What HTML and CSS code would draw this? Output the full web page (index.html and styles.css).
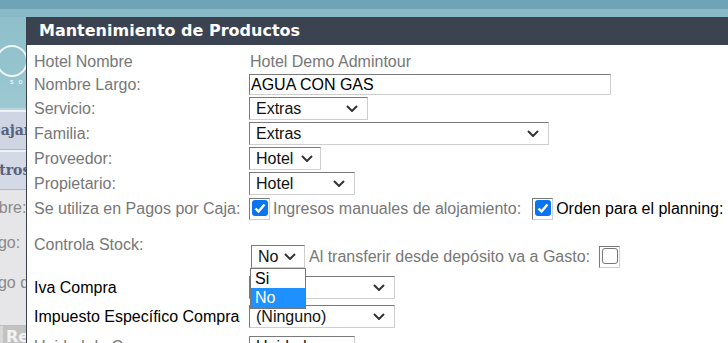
FILE: index.html
```html
<!DOCTYPE html>
<html lang="es">
<head>
  <meta charset="UTF-8">
  <meta name="viewport" content="width=device-width, initial-scale=1.0">
  <title>Mantenimiento de Productos</title>
  <link rel="stylesheet" href="styles.css">
</head>
<body>
  <!-- Page behind the dialog -->
  <div class="backdrop">
    <div class="band-top"></div>
    <div class="band-sub"></div>
    <div class="side">
      <div class="side-logo">
        <div class="logo-ring"></div>
        <div class="logo-text">sor</div>
      </div>
      <div class="side-menu">
        <div class="menu-item first"><span>Trabajar</span></div>
        <div class="menu-item"><span>Otros</span></div>
      </div>
      <div class="side-fields">
        <div class="field f1">Nombre:</div>
        <div class="field f2">Código:</div>
        <div class="field f3">Código de</div>
      </div>
      <div class="side-tools"><span class="tool-dark"></span><span class="tool-btn">Re</span></div>
    </div>
  </div>

  <!-- Dialog -->
  <div class="dialog">
    <div class="dialog-title">Mantenimiento de Productos</div>
    <div class="form">
      <div class="row h22">
        <div class="label">Hotel Nombre</div>
        <div class="value">Hotel Demo Admintour</div>
      </div>
      <div class="row h23">
        <div class="label">Nombre Largo:</div>
        <input class="text-input" type="text" value="AGUA CON GAS">
      </div>
      <div class="row h25">
        <div class="label">Servicio:</div>
        <div class="select w-servicio"><span>Extras</span><svg class="chev" width="12" height="7" viewBox="0 0 12 7"><path d="M1 1 L6 6 L11 1" fill="none" stroke="#333" stroke-width="2"/></svg></div>
      </div>
      <div class="row h25">
        <div class="label">Familia:</div>
        <div class="select w-familia"><span>Extras</span><svg class="chev" width="12" height="7" viewBox="0 0 12 7"><path d="M1 1 L6 6 L11 1" fill="none" stroke="#333" stroke-width="2"/></svg></div>
      </div>
      <div class="row h25">
        <div class="label">Proveedor:</div>
        <div class="select w-prov"><span>Hotel</span><svg class="chev" width="12" height="7" viewBox="0 0 12 7"><path d="M1 1 L6 6 L11 1" fill="none" stroke="#333" stroke-width="2"/></svg></div>
      </div>
      <div class="row h25">
        <div class="label">Propietario:</div>
        <div class="select w-prop"><span>Hotel</span><svg class="chev" width="12" height="7" viewBox="0 0 12 7"><path d="M1 1 L6 6 L11 1" fill="none" stroke="#333" stroke-width="2"/></svg></div>
      </div>
      <div class="row h25">
        <div class="label">Se utiliza en Pagos por Caja:</div>
        <div class="inline">
          <span class="check-frame"><span class="check on"><svg width="16" height="16" viewBox="0 0 16 16"><path d="M3.5 8.5 L6.5 11.5 L12.5 4.5" fill="none" stroke="#fff" stroke-width="2.4"/></svg></span></span>
          <span class="gray gap3">Ingresos manuales de alojamiento:</span>
          <span class="check-frame gap11"><span class="check on"><svg width="16" height="16" viewBox="0 0 16 16"><path d="M3.5 8.5 L6.5 11.5 L12.5 4.5" fill="none" stroke="#fff" stroke-width="2.4"/></svg></span></span>
          <span class="dark gap3">Orden para el planning:</span>
        </div>
      </div>
      <div class="row h51">
        <div class="label top">Controla Stock:</div>
        <div class="inline bottom">
          <div class="select-wrap">
            <div class="select w-stock"><span>No</span><svg class="chev" width="12" height="7" viewBox="0 0 12 7"><path d="M1 1 L6 6 L11 1" fill="none" stroke="#333" stroke-width="2"/></svg></div>
            <ul class="dropdown">
              <li>Si</li>
              <li class="active">No</li>
            </ul>
          </div>
          <span class="gray gap4">Al transferir desde depósito va a Gasto:</span>
          <span class="check-frame gap9"><span class="check"></span></span>
        </div>
      </div>
      <div class="row h31">
        <div class="label dark">Iva Compra</div>
        <div class="select w-iva"><span>Básico</span><svg class="chev" width="12" height="7" viewBox="0 0 12 7"><path d="M1 1 L6 6 L11 1" fill="none" stroke="#333" stroke-width="2"/></svg></div>
      </div>
      <div class="row h27">
        <div class="label dark">Impuesto Específico Compra</div>
        <div class="select w-iva"><span>(Ninguno)</span><svg class="chev" width="12" height="7" viewBox="0 0 12 7"><path d="M1 1 L6 6 L11 1" fill="none" stroke="#333" stroke-width="2"/></svg></div>
      </div>
      <div class="row h34">
        <div class="label">Unidad de Compra:</div>
        <div class="select w-prop"><span>Unidad</span><svg class="chev" width="12" height="7" viewBox="0 0 12 7"><path d="M1 1 L6 6 L11 1" fill="none" stroke="#333" stroke-width="2"/></svg></div>
      </div>
    </div>
  </div>
</body>
</html>
```

FILE: styles.css
```css
/* General */
body {
  margin: 0;
  font-family: "Liberation Sans", Arial, sans-serif;
  font-size: 16px;
  overflow: hidden;
  height: 343px;
  background: #e8e8eb;
}

/* Backdrop page */
.band-top {
  height: 9px;
  background: #6fa3b5;
}

.band-sub {
  height: 8px;
  background: #89bac7;
}

.side {
  width: 26px;
  overflow: hidden;
}

.side-logo {
  position: relative;
  height: 91px;
  background: linear-gradient(#8ebfca, #9cc8d1);
  border-bottom: 2px solid #b9d6de;
  overflow: hidden;
}

.logo-ring {
  position: absolute;
  left: -4px;
  top: 28px;
  width: 28px;
  height: 28px;
  border: 2px solid rgba(255, 255, 255, 0.85);
  border-radius: 50%;
}

.logo-text {
  position: absolute;
  left: 10px;
  top: 61px;
  font-size: 7px;
  letter-spacing: 5px;
  color: #fff;
  white-space: nowrap;
}

.menu-item {
  height: 37px;
  line-height: 37px;
  background: #d3d9e5;
  border-top: 2px solid #eef1f7;
  border-bottom: 1px solid #a9b7cf;
  font-family: "DejaVu Serif", serif;
  font-weight: bold;
  font-size: 14px;
  color: #55627e;
  white-space: nowrap;
}

.menu-item span {
  display: inline-block;
  margin-left: -35px;
}

.menu-item + .menu-item span {
  margin-left: -13px;
}

.menu-item.first {
  background: #cfd5e2;
}

.side-fields {
  height: 135px;
  background: #e6e6e8;
  color: #8a8a8a;
  white-space: nowrap;
}

.field {
  height: 18px;
}

.f1 { padding-top: 9px; margin-left: -35px; }
.f2 { padding-top: 17px; margin-left: -35px; }
.f3 { padding-top: 22px; margin-left: -35px; }

.side-tools {
  display: flex;
  height: 20px;
  border-top: 1px solid #b8bfcc;
  background: #d8d8d8;
}

.tool-dark {
  width: 5px;
  background: #8d8d8d;
}

.tool-btn {
  margin-left: 3px;
  padding-left: 3px;
  background: #c2c2c2;
  font-family: "DejaVu Sans", sans-serif;
  font-weight: bold;
  font-size: 16px;
  color: #f2f2f2;
  line-height: 22px;
}

/* Dialog */
.dialog {
  position: absolute;
  left: 26px;
  top: 17px;
  right: -40px;
  bottom: -60px;
  background: #fff;
  border-left: 1px solid #3a404c;
}

.dialog-title {
  height: 28px;
  line-height: 28px;
  padding-left: 12px;
  background: #3c4350;
  color: #fff;
  font-family: "DejaVu Sans", Verdana, sans-serif;
  font-weight: bold;
  font-size: 16px;
}

.form {
  padding: 6px 0 0 7px;
}

.row {
  display: flex;
  align-items: center;
  line-height: 18px;
}

.h22 { height: 22px; }
.h23 { height: 23px; }
.h25 { height: 25px; }
.h27 { height: 27px; }
.h31 { height: 31px; }
.h34 { height: 34px; }
.h51 { height: 51px; }

.label {
  width: 215px;
  flex-shrink: 0;
  color: #777;
  white-space: nowrap;
}

.label.top {
  align-self: flex-start;
  padding-top: 15px;
}

.label.dark,
.dark {
  color: #000;
}

.gray {
  color: #777;
}

.value {
  color: #777;
  margin-left: 1px;
}

.inline {
  display: flex;
  align-items: center;
  white-space: nowrap;
}

.inline.bottom {
  align-self: flex-end;
  margin-bottom: 4px;
  margin-left: 2px;
}

.gap3 { margin-left: 3px; }
.gap4 { margin-left: 4px; }
.gap9 { margin-left: 9px; }
.gap11 { margin-left: 11px; }

/* Inputs */
.text-input {
  box-sizing: border-box;
  width: 362px;
  height: 21px;
  margin: 0;
  padding: 0 1px;
  border: 1px solid;
  border-color: #7a7a7a #cfcfcf #cfcfcf #7a7a7a;
  font-family: "Liberation Sans", Arial, sans-serif;
  font-size: 16px;
  color: #000;
  outline: none;
}

.select {
  box-sizing: border-box;
  display: flex;
  align-items: center;
  justify-content: space-between;
  height: 23px;
  padding: 0 9px 0 6px;
  border: 1px solid;
  border-color: #7a7a7a #cfcfcf #cfcfcf #7a7a7a;
  background: #fff;
  color: #111;
}

.w-servicio { width: 119px; }
.w-familia { width: 300px; }
.w-prov { width: 72px; padding-right: 7px; }
.w-prop { width: 106px; }
.w-stock { width: 54px; padding-right: 8px; }
.w-iva { width: 146px; }

.chev {
  flex-shrink: 0;
}

/* Checkboxes */
.check-frame {
  box-sizing: border-box;
  display: inline-block;
  width: 21px;
  height: 22px;
  padding: 1px 0 0 2px;
  border: 1px solid;
  border-color: #7a7a7a #cfcfcf #cfcfcf #7a7a7a;
}

.check {
  box-sizing: border-box;
  display: block;
  width: 16px;
  height: 16px;
  border: 1px solid #767676;
  border-radius: 3px;
  background: #fff;
}

.check.on {
  border: none;
  background: #0b74f0;
}

.check svg {
  display: block;
}

/* Open dropdown list */
.select-wrap {
  position: relative;
}

.dropdown {
  position: absolute;
  top: 23px;
  left: -1px;
  z-index: 2;
  width: 56px;
  margin: 0;
  padding: 0;
  list-style: none;
  box-sizing: border-box;
  border: 1px solid #767676;
  background: #fff;
}

.dropdown li {
  height: 19px;
  line-height: 19px;
  padding-left: 4px;
  color: #000;
}

.dropdown li.active {
  height: 20px;
  background: #1e90ff;
  color: #fff;
}
```
